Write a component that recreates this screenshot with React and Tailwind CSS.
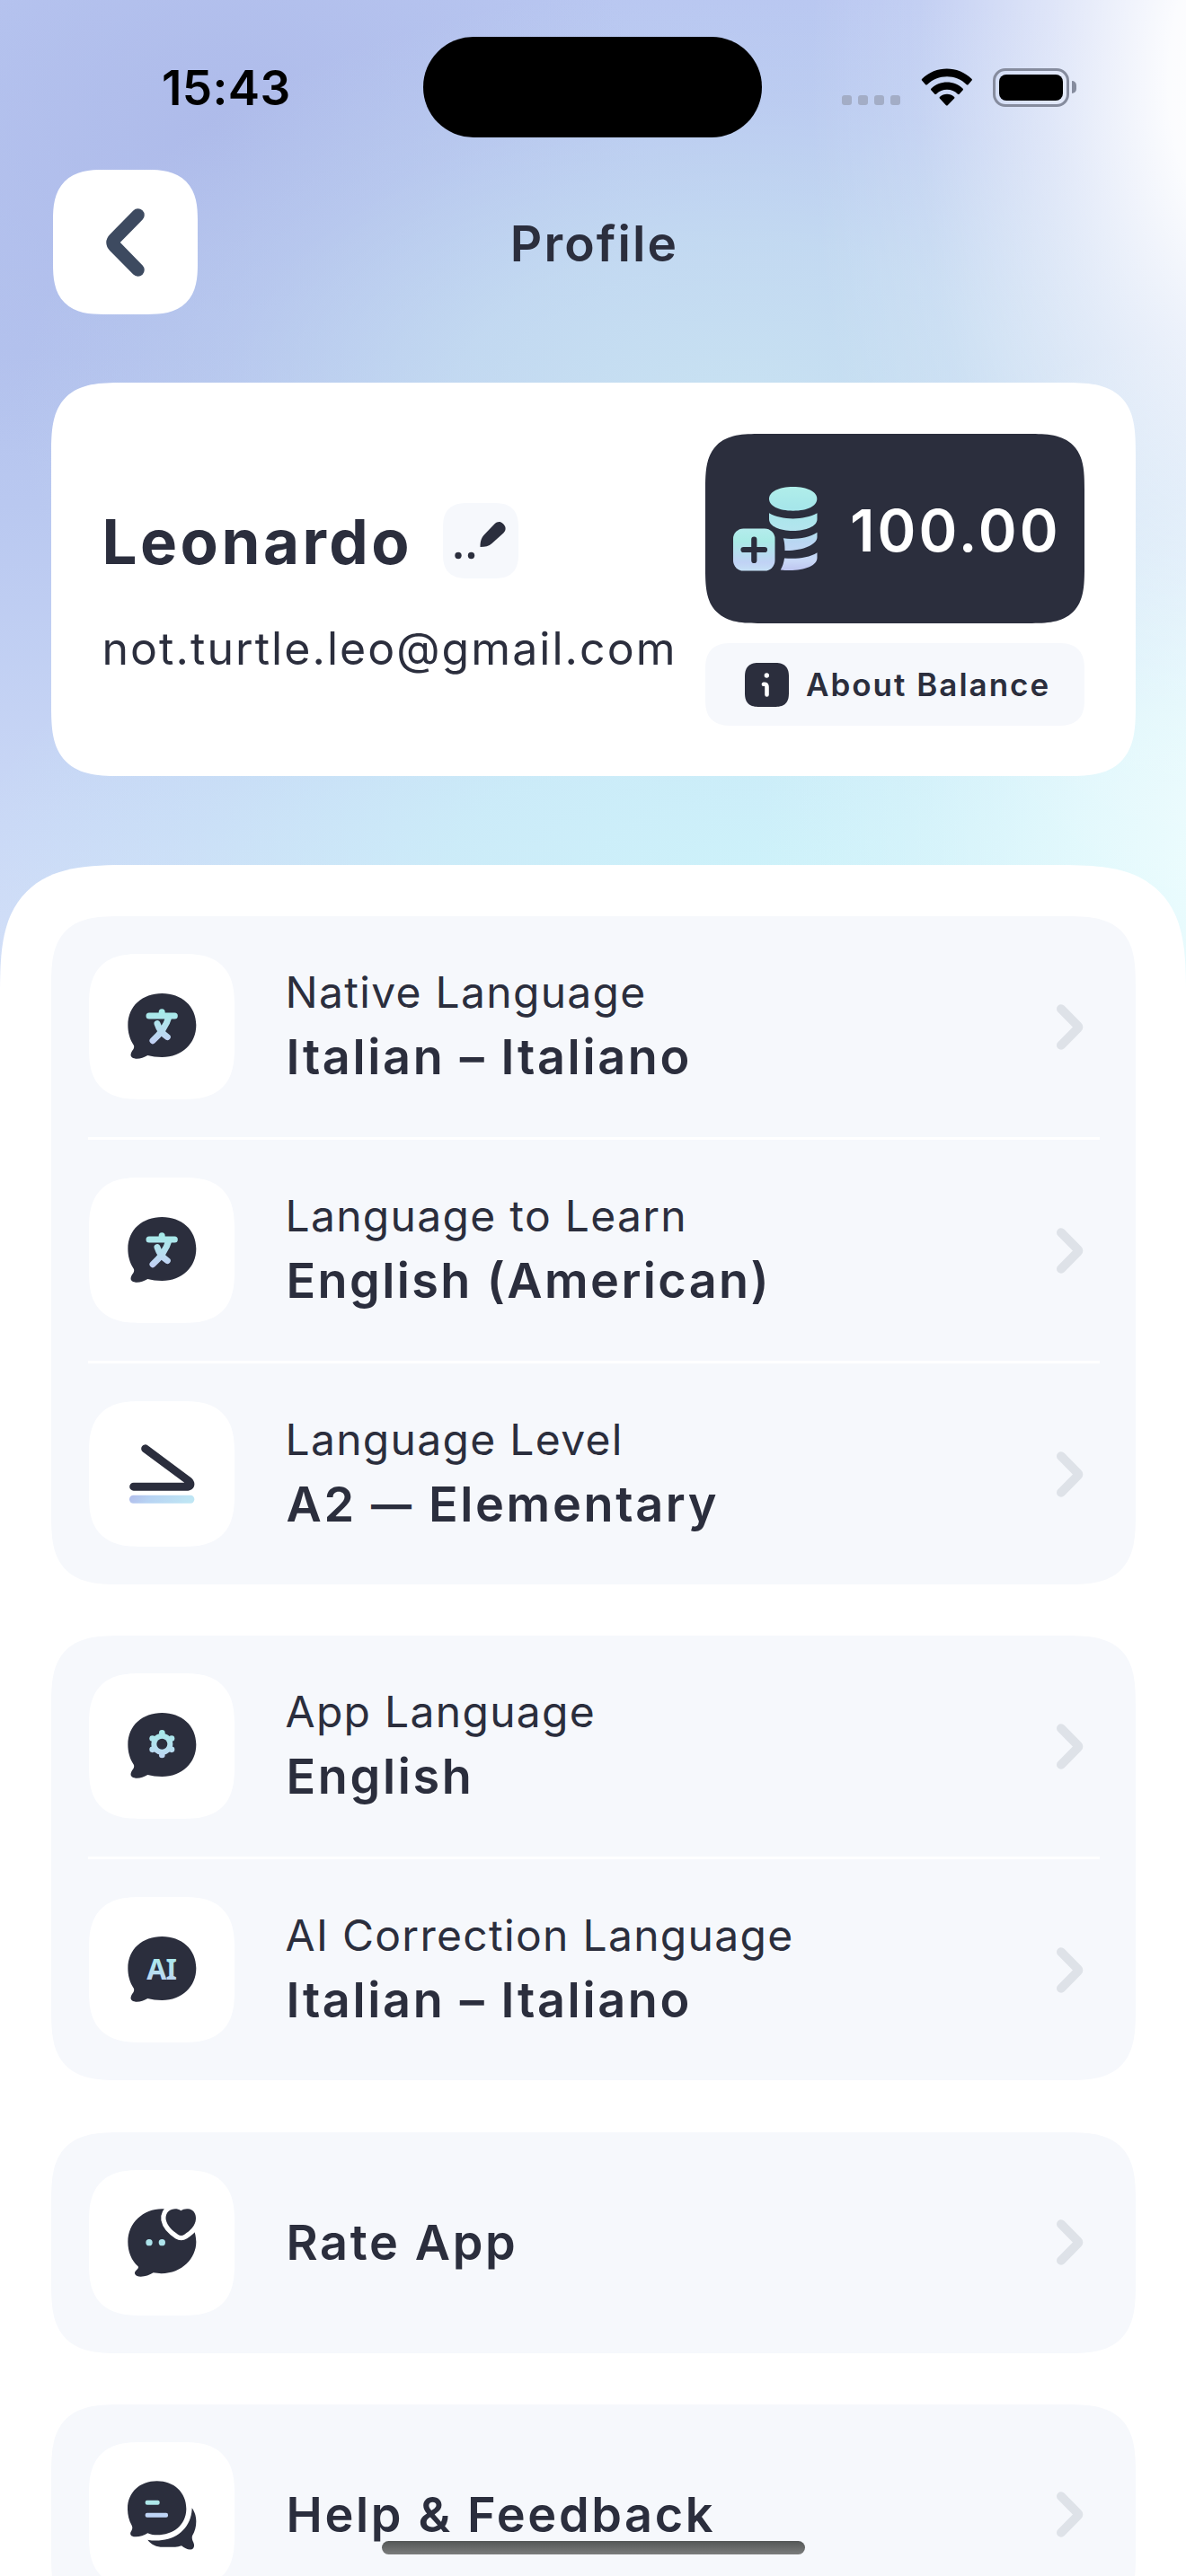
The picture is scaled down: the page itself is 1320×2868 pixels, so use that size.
import React from "react";

const INK = "#2b2e3d";

function BubbleShape() {
  return (
    <path
      fill={INK}
      d="M205 372C191 352 185 328 185 304C185 240 234 198 299 198C364 198 413 240 413 304C413 366 366 411 299 411C281 411 265 409 251 405C238 413 224 417 211 416C197 415 192 407 196 397C199 388 208 383 205 372Z"
    />
  );
}

function TileSvg({ children }) {
  return (
    <svg className="size-full" viewBox="55 66 486 486" fill="none">
      <defs>
        <linearGradient id="mint" gradientUnits="userSpaceOnUse" x1="0" y1="250" x2="0" y2="366">
          <stop offset="0" stopColor="#a3ebe8" />
          <stop offset="0.45" stopColor="#b3e2ee" />
          <stop offset="1" stopColor="#c3cff4" />
        </linearGradient>
      </defs>
      {children}
    </svg>
  );
}

function TranslateIcon() {
  return (
    <TileSvg>
      <BubbleShape />
      <g stroke="url(#mint)" strokeWidth="21" strokeLinecap="round" strokeLinejoin="round">
        <path d="M256 273H341M298.5 260V272M322 276C315 300 299 328 268 356M283 299C289 318 302 334 317 344" />
      </g>
    </TileSvg>
  );
}

function LevelIcon() {
  return (
    <TileSvg>
      <defs>
        <linearGradient id="bar" x1="0" y1="0" x2="1" y2="0.1">
          <stop offset="0" stopColor="#b1bceb" />
          <stop offset="0.35" stopColor="#b7d3f3" />
          <stop offset="1" stopColor="#bfe6f4" />
        </linearGradient>
      </defs>
      <path
        d="M243 224.500L387 331.500Q401 345 386 351.500L204 351.500"
        stroke={INK}
        strokeWidth="27"
        strokeLinecap="round"
        strokeLinejoin="round"
      />
      <rect x="190" y="380" width="217" height="27" rx="13" fill="url(#bar)" />
    </TileSvg>
  );
}

function GearIcon() {
  const teeth = [0, 1, 2, 3, 4, 5];
  return (
    <TileSvg>
      <BubbleShape />
      <g fill="url(#mint)">
        <circle cx="299" cy="302" r="36" />
        {teeth.map((t) => (
          <circle
            key={t}
            cx={299 + 37 * Math.sin((t * Math.PI) / 3)}
            cy={302 - 37 * Math.cos((t * Math.PI) / 3)}
            r="10"
          />
        ))}
      </g>
      <circle cx="299" cy="302" r="18" fill={INK} />
    </TileSvg>
  );
}

function AiIcon() {
  return (
    <TileSvg>
      <BubbleShape />
      <text
        x="297"
        y="341"
        textAnchor="middle"
        fill="url(#mint)"
        className="font-['Noto_Sans',sans-serif] text-[96px] font-bold tracking-[-3px]"
      >
        AI
      </text>
    </TileSvg>
  );
}

function RateIcon() {
  const heart =
    "M362 202C352 195 341 195 331 198C316 203 310 217 312 232C316 253 335 270 352 281C360 286 366 286 374 281C392 270 411 253 412 229C413 211 402 196 386 196C376 195 368 198 362 202Z";
  return (
    <TileSvg>
      <path
        fill={INK}
        d="M219 388C197 368 185 339 185 306C185 243 236 196 299 196C362 196 413 243 413 306C413 366 355 424 270 409C257 417 243 422 228 422C209 422 203 410 212 402C220 395 221 393 219 388Z"
      />
      <path d={heart} fill="white" stroke="white" strokeWidth="32" strokeLinejoin="round" />
      <path d={heart} fill={INK} />
      <circle cx="256" cy="308" r="11" fill="#ade3eb" />
      <circle cx="299" cy="308" r="11" fill="#ade3eb" />
    </TileSvg>
  );
}

function HelpIcon() {
  return (
    <TileSvg>
      <path
        fill={INK}
        d="M198 344C188 326 184 308 184 288C184 233 226 196 282 196C338 196 380 233 380 288C380 342 338 376 282 376C272 376 262 375 251 370C239 378 225 382 212 382C197 382 190 375 195 365C199 358 202 352 198 344Z"
      />
      <path
        fill={INK}
        d="M399 286C408 298 413 313 413 330C413 348 409 364 400 379C398 386 400 393 404 401C409 413 405 424 394 424.500C384 425 374 420 364 412C357 414 351 416 343 416H302C280 416 263 408 251 392C266 395 283 396 299 393C358 387 398 343 399 286Z"
      />
      <rect x="243" y="260" width="48" height="15.500" rx="6" fill="#aee8ea" />
      <rect x="243" y="302" width="76" height="15.500" rx="6" fill="#bfd5f6" />
    </TileSvg>
  );
}

function CoinsIcon() {
  return (
    <svg className="h-[94px] w-[94px] shrink-0" viewBox="0 0 94 94" fill="none">
      <defs>
        <linearGradient id="plus" x1="0" y1="0" x2="0" y2="1">
          <stop offset="0" stopColor="#b4ecec" />
          <stop offset="0.3" stopColor="#a9ebe6" />
          <stop offset="0.8" stopColor="#c0d2f5" />
          <stop offset="1" stopColor="#c5e0f5" />
        </linearGradient>
        <linearGradient id="stack" gradientUnits="userSpaceOnUse" x1="0" y1="0" x2="0" y2="94">
          <stop offset="0" stopColor="#b0eeea" />
          <stop offset="0.25" stopColor="#a6e6ea" />
          <stop offset="0.5" stopColor="#b3e5ee" />
          <stop offset="0.65" stopColor="#b9d6f2" />
          <stop offset="0.88" stopColor="#c9d8f7" />
          <stop offset="1" stopColor="#bcc3ee" />
        </linearGradient>
      </defs>
      <g fill="url(#stack)">
        <path d="M66.700 0C83 0 93.300 5.500 93.300 13.300C93.300 21.500 83 26.700 66.700 26.700C50.500 26.700 40 21.500 40 13.300C40 5.500 50.500 0 66.700 0Z" />
        <path d="M40 29.300C54 37.500 79 37.500 93.500 29.300V36C93.500 44 81 49 66.700 49C52 49 40 44 40 36Z" />
        <path d="M55.800 57.300C69 59 84 57 93.500 50.700V56C93.500 64.500 77 71.500 57.500 71C57.500 65 57 61 55.800 57.300Z" />
        <path d="M57 79.500C70 80.500 84 79.500 93.500 73.300V79C93.500 89 75 95 52.700 92.500C55 88.500 56.500 84 57 79.500Z" />
      </g>
      <rect x="0" y="46.500" width="46.500" height="47" rx="11.500" fill="url(#plus)" />
      <path d="M11.500 70H35M23.300 58.500V82" stroke={INK} strokeWidth="6.200" strokeLinecap="round" />
    </svg>
  );
}

function StatusBar() {
  return (
    <div className="flex h-[189px] shrink-0 items-center pt-[41px] pb-[36px]">
      <div className="w-[471px] pt-[2px] pl-[180px] text-[53px] leading-[64px] font-semibold tracking-[0.4px] text-black">
        15:43
      </div>
      <div className="h-[112px] w-[377px] rounded-full bg-black" />
      <div className="flex flex-1 items-center pl-[89px]">
        <div className="flex gap-[7px] pt-[28px]">
          {[0, 1, 2, 3].map((d) => (
            <span key={d} className="h-[11px] w-[11px] rounded-[3px] bg-[#a3adc6]" />
          ))}
        </div>
        <svg className="ml-[23px] h-[42px] w-[58px]" viewBox="0 0 17 11.800" preserveAspectRatio="none" fill="black">
          <path d="M8.500 2.600c2.400 0 4.700.9 6.400 2.500.1.100.3.100.5 0l1.200-1.300c.1-.1.100-.3 0-.4-4.600-4.300-11.700-4.300-16.300 0-.1.100-.1.300 0 .4l1.200 1.300c.1.100.3.100.5 0C3.800 3.500 6.100 2.600 8.500 2.600z" />
          <path d="M8.500 6.700c1.300 0 2.600.5 3.500 1.400.1.100.3.100.5 0l1.200-1.300c.1-.1.100-.3 0-.4-2.900-2.700-7.500-2.700-10.400 0-.1.100-.1.300 0 .4l1.200 1.300c.1.100.3.100.5 0C5.900 7.200 7.200 6.700 8.500 6.700z" />
          <path d="M10.900 9.400c.1-.1.100-.3 0-.4-1.400-1.200-3.400-1.200-4.800 0-.1.100-.1.300 0 .4l2.100 2.200c.1.100.4.100.5 0l2.200-2.200z" />
        </svg>
        <div className="ml-[22px] h-[43px] w-[85px] rounded-[14px] border-[3px] border-[#868c9e] p-[4px]">
          <div className="h-full w-full rounded-[8px] bg-black" />
        </div>
        <div className="ml-[3px] h-[14px] w-[5px] rounded-r-full bg-[#868c9e]" />
      </div>
    </div>
  );
}

function Header() {
  return (
    <div className="grid h-[161px] shrink-0 grid-cols-[1fr_auto_1fr] items-center px-[59px]">
      <button className="h-[161px] w-[161px] rounded-[56px] bg-white [corner-shape:superellipse(1.4)]">
        <svg className="size-full" viewBox="0 0 161 161" fill="none">
          <path
            d="M94.500 50.500L68.500 77Q64.500 81 68.500 85L94.500 111.500"
            stroke="#3d4a60"
            strokeWidth="14.500"
            strokeLinecap="round"
            strokeLinejoin="round"
          />
        </svg>
      </button>
      <h1 className="pt-[3px] pl-[3px] text-[55px] leading-[68px] font-semibold tracking-[2.1px] text-[#2b2e3d]">
        Profile
      </h1>
      <span />
    </div>
  );
}

function ProfileCard() {
  return (
    <section className="mx-[56.5px] mt-[76px] flex h-[438px] shrink-0 justify-between rounded-[80px] bg-white pt-[57px] pr-[56.5px] pl-[57px] [corner-shape:superellipse(1.6)]">
      <div className="flex flex-col pt-[77px] whitespace-nowrap text-[#2b2e3d]">
        <div className="flex h-[84px] items-center">
          <h2 className="pt-[1px] text-[69px] leading-[80px] font-bold tracking-[3.5px]">Leonardo</h2>
          <button className="ml-[34px] h-[84px] w-[84px] rounded-[28px] bg-[#f6f8fc] [corner-shape:superellipse(1.4)]">
            <svg className="size-full" viewBox="0 0 84 84" fill={INK}>
              <circle cx="17" cy="58.500" r="3.700" />
              <circle cx="31.500" cy="58.500" r="3.700" />
              <path d="M41.500 49C41.500 42 43 38.500 46 35.300L57.500 23.300C60.500 20.200 64 20.200 66.500 22.700L67.800 24C70.300 27 70.300 30.500 67.300 33.500L54.500 45C51 48 47 49 41.500 49Z" />
            </svg>
          </button>
        </div>
        <p className="mt-[46px] text-[50px] leading-[64px] tracking-[2.05px]">not.turtle.leo@gmail.com</p>
      </div>
      <div className="flex w-[422px] shrink-0 flex-col gap-[22px]">
        <div className="flex h-[211px] items-center rounded-[62px] bg-[#2b2e3d] pl-[31px] [corner-shape:superellipse(1.6)]">
          <CoinsIcon />
          <span className="ml-[36px] pt-[4px] text-[65px] leading-[80px] font-semibold tracking-[3.1px] text-white">
            100.00
          </span>
        </div>
        <div className="flex h-[92px] items-center rounded-[30px] bg-[#f6f8fc] pl-[44px] [corner-shape:superellipse(1.4)]">
          <svg className="h-[49px] w-[49px] rounded-[16px] bg-[#2b2e3d] [corner-shape:superellipse(1.4)]" viewBox="0 0 49 49" fill="none">
            <circle cx="24.300" cy="14" r="2.700" fill="white" />
            <path d="M21 23.800Q24.500 23.200 24.500 27V35.500" stroke="white" strokeWidth="4.600" strokeLinecap="round" />
          </svg>
          <span className="ml-[19px] text-[35px] leading-[44px] font-semibold tracking-[2px] whitespace-nowrap text-[#2b2e3d]">
            About Balance
          </span>
        </div>
      </div>
    </section>
  );
}

function Row({ icon: Icon, label, value, first }) {
  return (
    <>
      {!first && <div className="mr-[40px] ml-[41.5px] h-[3px] shrink-0 bg-white" />}
      <div className="flex h-[246px] shrink-0 items-center pr-[58px] pl-[42px] text-[#2b2e3d]">
        <div className="h-[162px] w-[162px] shrink-0 rounded-[58px] bg-white [corner-shape:superellipse(1.4)]">
          <Icon />
        </div>
        <div className={label ? "flex-1 pt-[4px] pl-[57px]" : "flex-1 pl-[57px]"}>
          {label && <div className="text-[48px] leading-[64px] tracking-[1.3px]">{label}</div>}
          <div className="pl-[1px] text-[54px] leading-[80px] font-semibold tracking-[2.65px]">{value}</div>
        </div>
        <svg className="h-[51px] w-[30px]" viewBox="0 0 30 51" fill="none">
          <path d="M5 5.300L23.700 24.200Q25 25.500 23.700 26.800L5 45.700" stroke="#dee2e8" strokeWidth="10" strokeLinecap="round" />
        </svg>
      </div>
    </>
  );
}

const groups = [
  [
    { icon: TranslateIcon, label: "Native Language", value: "Italian – Italiano" },
    {
      icon: TranslateIcon,
      label: "Language to Learn",
      value: <span className="tracking-[2.4px]">English (American)</span>,
    },
    {
      icon: LevelIcon,
      label: "Language Level",
      value: (
        <>
          A2 <span className="align-[3px] text-[45px] leading-none font-bold">—</span> Elementary
        </>
      ),
    },
  ],
  [
    { icon: GearIcon, label: "App Language", value: "English" },
    { icon: AiIcon, label: "AI Correction Language", value: "Italian – Italiano" },
  ],
  [{ icon: RateIcon, value: "Rate App" }],
  [{ icon: HelpIcon, value: "Help & Feedback" }],
];

export default function App() {
  return (
    <main className="relative flex h-[2868px] w-[1320px] flex-col overflow-hidden bg-white font-['Inter',sans-serif]">
      <div className="flex h-[1120px] shrink-0 flex-col bg-[radial-gradient(ellipse_490px_950px_at_1390px_90px,#ffffff_0%,#fffffff2_18%,#ffffff8c_45%,#ffffff26_75%,transparent_100%),radial-gradient(ellipse_560px_600px_at_1400px_960px,#effefe_0%,#e6fbfdd9_35%,#e2fafc59_70%,transparent_100%),radial-gradient(ellipse_900px_420px_at_860px_980px,#cdf2fa_0%,#ccf0f9cc_40%,#cbf0f94d_72%,transparent_100%),radial-gradient(ellipse_800px_480px_at_820px_460px,#c8e2f2_0%,#c7e0f2bf_40%,#c5dbf24d_72%,transparent_100%),radial-gradient(ellipse_480px_400px_at_240px_150px,#aebbea_0%,transparent_100%),linear-gradient(180deg,#b9c7f1_0%,#b4c3ee_35%,#b9c8f0_50%,#cad8f6_82%,#d4e0f8_100%)]">
        <StatusBar />
        <Header />
        <ProfileCard />
      </div>
      <div className="-mt-[157px] flex flex-1 flex-col gap-[57.33px] rounded-t-[145px] bg-white px-[56.5px] pt-[57px] [corner-shape:superellipse(1.6)]">
        {groups.map((rows, i) => (
          <section key={i} className="flex shrink-0 flex-col rounded-[80px] bg-[#f6f8fc] [corner-shape:superellipse(1.6)]">
            {rows.map((r, j) => (
              <Row key={j} {...r} first={j === 0} />
            ))}
          </section>
        ))}
      </div>
      <div className="absolute bottom-[24px] left-[425px] h-[15px] w-[471px] rounded-full bg-linear-to-b from-[#545757] to-[#7b7c7c]" />
    </main>
  );
}
